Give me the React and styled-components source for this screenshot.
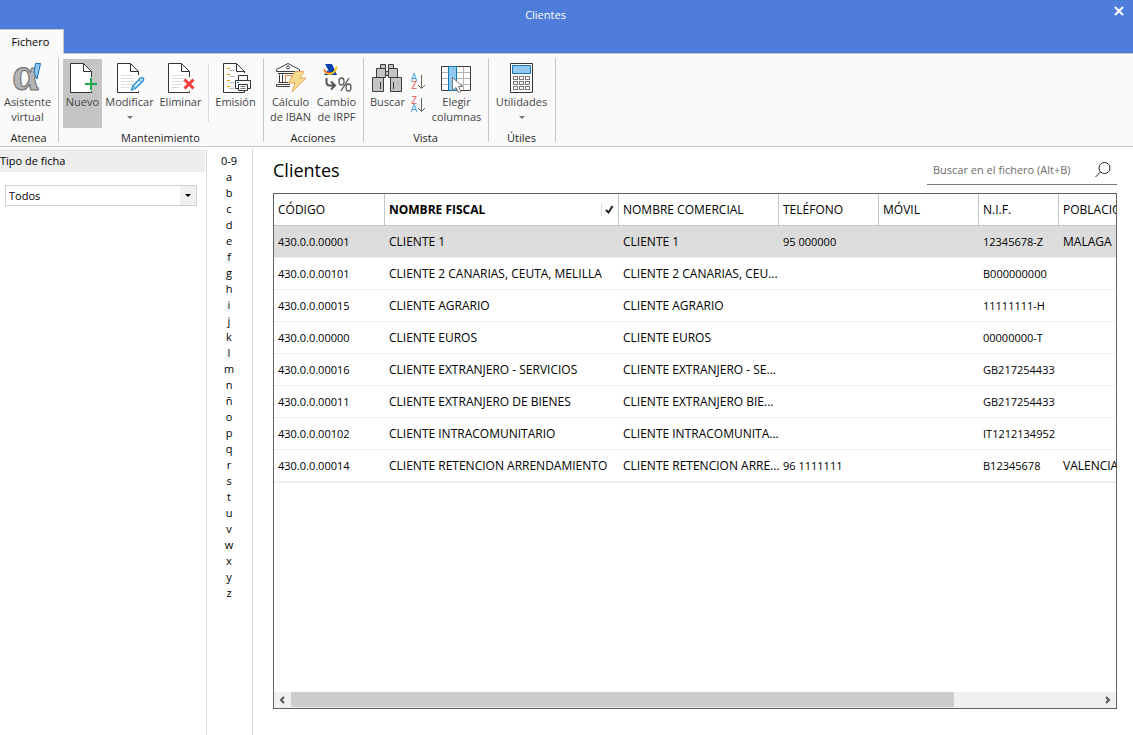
import React, { useRef, useState } from 'react';
import styled, { createGlobalStyle } from 'styled-components';

const GlobalStyle = createGlobalStyle`
  * { box-sizing: border-box; }
  body {
    margin: 0;
    background: #fff;
    color: #000;
    font-family: "Open Sans", "Noto Sans", sans-serif;
    font-size: 11px;
  }
  button, input, select { font: inherit; color: inherit; }
`;

//Window frame
const Window = styled.div`
  display: flex;
  flex-direction: column;
  height: 100vh;
  overflow: hidden;
`;

const TitleBar = styled.header`
  display: flex;
  height: 29px;
  flex: none;
  background: #4d7cdb;
  color: #fff;
`;

const WindowTitle = styled.div`
  flex: 1;
  text-align: center;
  line-height: 30px;
`;

const CloseButton = styled.button`
  display: flex;
  justify-content: flex-end;
  align-items: center;
  width: 42px;
  height: 22px;
  padding: 0 9px 0 0;
  border: 0;
  background: none;
`;

const TabStrip = styled.nav`
  display: flex;
  flex: none;
  height: 24px;
  background: #4d7cdb;
`;

const Tab = styled.button`
  position: relative;
  height: 25px;
  width: 64px;
  padding: 0 2px 2px 0;
  border: solid #c6c6c6;
  border-width: 1px 1px 0 0;
  background: #fafafa;
  color: #000;
`;

//Ribbon
const Ribbon = styled.div`
  display: flex;
  flex: none;
  height: 94px;
  padding-top: 4px;
  background: #fafafa;
  border: solid #c6c6c6;
  border-width: 1px 0;
`;

const Group = styled.section`
  display: flex;
  flex-direction: column;
  width: ${p => p.$width}px;
  padding-top: 1px;
  background: linear-gradient(#c6c6c6, #c6c6c6) right top / 1px 84px no-repeat;
`;

const GroupButtons = styled.div`
  display: flex;
  gap: 2px;
  height: 69px;
  padding: 0 4px;
`;

const GroupCaption = styled.div`
  margin-top: 2px;
  padding-right: 2px;
  line-height: 16px;
  text-align: center;
  color: #222;
`;

const ToolButton = styled.button`
  display: flex;
  flex: none;
  flex-direction: column;
  align-items: center;
  width: ${p => p.$width}px;
  padding: 3px 0 0;
  border: 0;
  background: ${p => (p.$active ? '#c5c5c5' : 'transparent')};
  color: #444;
  line-height: 15px;
  white-space: pre;
`;

const Icon = styled.svg`
  display: block;
  flex: none;
  width: 31px;
  height: 31px;
  margin-bottom: 1px;
  overflow: visible;
`;

const Caret = styled.span`
  margin-top: 7px;
  border: solid transparent;
  border-width: 3px 3px 0;
  border-top-color: #777;
`;

const ToolSeparator = styled.div`
  width: 1px;
  margin: 5px 2px 6px;
  background: #dadada;
`;

const SortButtons = styled.div`
  display: flex;
  flex-direction: column;
  gap: 7px;
  width: 17px;
  padding-top: 15px;
`;

const SortButton = styled.button`
  height: 16px;
  padding: 0;
  border: 0;
  background: none;

  svg { display: block; overflow: visible; }
`;

//Body
const Body = styled.div`
  display: flex;
  flex: 1;
  min-height: 0;
  padding-top: 2px;
`;

const Sidebar = styled.aside`
  flex: none;
  width: 207px;
  border-right: 1px solid #dadada;
`;

const SidebarLabel = styled.label`
  display: block;
  margin-right: 1px;
  background: #eee;
  line-height: 23px;
`;

const SelectBox = styled.div`
  display: flex;
  position: relative;
  margin: 13px 9px 0 5px;
`;

const Select = styled.select`
  flex: 1;
  height: 21px;
  padding: 0 3px;
  border: 1px solid #d0d0d0;
  border-radius: 0;
  appearance: none;
  background: linear-gradient(#f0f0f0, #f0f0f0) right / 16px 100% no-repeat #fff;
`;

const SelectArrow = styled.span`
  position: absolute;
  right: 6px;
  top: 9px;
  border: solid transparent;
  border-width: 3px 3px 0;
  border-top-color: #000;
  pointer-events: none;
`;

const LetterIndex = styled.nav`
  display: flex;
  flex: none;
  flex-direction: column;
  align-items: center;
  width: 46px;
  padding: 4px 1px 0 0;
  border-right: 1px solid #dadada;
`;

const Letter = styled.a`
  line-height: 16px;
  color: #000;
  text-decoration: none;
`;

const Main = styled.main`
  display: flex;
  flex: 1;
  flex-direction: column;
  min-width: 0;
  padding: 6px 16px 26px 20px;
`;

const MainHead = styled.div`
  display: flex;
  justify-content: space-between;
  margin-bottom: 8px;
`;

const Heading = styled.h1`
  margin: 0;
  font-size: 18px;
  font-weight: 400;
  line-height: 30px;
`;

const SearchBox = styled.form`
  display: flex;
  align-items: center;
  width: 190px;
  height: 30px;
  padding: 0 6px;
  border-bottom: 1px solid #777;
`;

const SearchInput = styled.input`
  flex: 1;
  min-width: 0;
  padding: 0;
  border: 0;
  outline: 0;
  background: none;

  &::placeholder { color: #6d6d6d; opacity: 1; }
`;

const SearchButton = styled.button`
  padding: 0;
  border: 0;
  background: none;

  svg { display: block; }
`;

const Grid = styled.div`
  display: flex;
  flex: 1;
  flex-direction: column;
  min-height: 0;
  border: 1px solid #606060;
`;

const GridScroll = styled.div`
  flex: 1;
  overflow: hidden;
`;

const Table = styled.table`
  width: 1027px;
  table-layout: fixed;
  border-collapse: separate;
  border-spacing: 0;
  border-bottom: 1px solid #eee;
  font-size: 12px;
`;

const Th = styled.th`
  height: 32px;
  padding: 0 4px;
  border: solid #c6c6c6;
  border-width: 0 1px 1px 0;
  font-weight: ${p => (p.$sorted ? 700 : 400)};
  text-align: left;
  white-space: nowrap;
`;

const ThContent = styled.div`
  display: flex;
  align-items: center;
  justify-content: space-between;
`;

const SortMark = styled.span`
  padding-left: 3px;
  border-left: 1px solid #dadada;

  svg { display: block; }
`;

const Td = styled.td`
  height: 32px;
  padding: 0 0 0 4px;
  border-bottom: 1px solid #eee;
  font-size: ${p => (p.$numeric ? 11 : 12)}px;
  overflow: hidden;
  white-space: nowrap;
`;

const Tr = styled.tr`
  background: ${p => (p.$selected ? '#dcdcdc' : '#fff')};
`;

const ScrollBar = styled.div`
  display: flex;
  height: 16px;
  background: #f0f0f0;
`;

const ScrollButton = styled.button`
  display: flex;
  align-items: center;
  justify-content: center;
  width: 17px;
  padding: 0;
  border: 0;
  background: none;
`;

const ScrollTrack = styled.div`
  flex: 1;
`;

const ScrollThumb = styled.div`
  width: 82%;
  height: 15px;
  background: #cdcdcd;
`;

//Icons
const Page = ({ open }) => (
  <>
    <path
      d={`M24.5 ${open}V9.5L16.5 1.5H3.5V30.5H24.5V29`}
      fill="#fff"
      stroke="none"
    />
    <path
      d={`M24.5 ${open}V9.5L16.5 1.5H3.5V30.5H24.5V29M16.5 1.5V9.5H24.5`}
      fill="none"
      stroke="#333"
    />
  </>
);

const TextLines = () => (
  <path d="M7 13.5H19M7 16.5H21M7 19.5H20M7 22.5H17M7 25.5H15" stroke="#dedede" />
);

const AlphaIcon = () => (
  <Icon viewBox="0 0 31 31">
    <text
      x="0"
      y="28"
      fontFamily="Liberation Serif, serif"
      fontSize="48"
      fontWeight="700"
      fill="#b4b4b4"
      stroke="#6b6b6b"
    >
      α
    </text>
    <path d="M23.500 1.500H28.500L25 17L22 11z" fill="#8fc6f2" stroke="#1b6fb5" />
  </Icon>
);

const NewIcon = () => (
  <Icon viewBox="0 0 31 31">
    <Page open={15} />
    <path d="M24 16V28M18 22H30" stroke="#1aa74f" strokeWidth="2" />
  </Icon>
);

const EditIcon = () => (
  <Icon viewBox="0 0 31 31">
    <Page open={13} />
    <TextLines />
    <path
      d="M17.500 28L19 23.500L26.500 16Q28.500 15 29.500 16.500Q30 18 29 19L21.500 26.500z"
      fill="#d3eaf9"
      stroke="#1d86c8"
      strokeWidth="1.300"
    />
    <path d="M19 23.500L21.500 26.500M25 17.500L27.500 20" stroke="#1d86c8" />
  </Icon>
);

const DeleteIcon = () => (
  <Icon viewBox="0 0 31 31">
    <Page open={15} />
    <TextLines />
    <path d="M19.500 17.500L28.500 26.500M28.500 17.500L19.500 26.500" stroke="#ee3d3a" strokeWidth="3" />
  </Icon>
);

const PrintIcon = () => (
  <Icon viewBox="0 0 31 31">
    <path d="M24.500 11V9.500L16.500 1.500H3.500V30.500H24.500V29M16.500 1.500V9.500H24.500" fill="#fff" stroke="#333" />
    <path d="M7 6.500H10M7 12.500H10M7 18.500H10M7 24.500H10" stroke="#e8940f" />
    <path d="M9 8.500H14M9 14.500H15M9 20.500H14M9 26.500H14" stroke="#bdbdbd" />
    <path d="M18.500 18.500V13.500H27.500V18.500" fill="#fff" stroke="#333" />
    <path d="M15.500 18.500H30.500V26.500H15.500z" fill="#fff" stroke="#333" />
    <path d="M18.500 22.500H27.500V28.500H18.500z" fill="#fff" stroke="#333" />
    <path d="M20.500 24.500H25.500M20.500 26.500H25.500" stroke="#777" />
    <path d="M17 20.500H19" stroke="#1d86c8" />
  </Icon>
);

const BankIcon = () => (
  <Icon viewBox="0 0 31 31" fill="none" stroke="#3c3c3c">
    <path d="M1.500 9.500V7.500L13 1.500L24.500 7.500V9.500z" fill="#fff" />
    <circle cx="13" cy="5.500" r="1.500" />
    <path d="M4.500 12.500V20M7.500 12.500V20M19.500 12.500V14M22.500 12.500V13M3 11.500H23" />
    <path d="M3.500 20.500H15M1.500 24.500H15M1.500 22.500H15M1.500 22.500V24.500" />
    <path d="M10.500 20V13.500H16.500V20" stroke="#e08d45" />
    <path
      d="M20 9.500H29L25 16H31L17 30L20 21H13.500z"
      fill="#f7da8c"
      stroke="#e9a55c"
    />
  </Icon>
);

const IrpfIcon = () => (
  <Icon viewBox="0 0 31 31" fill="none">
    <path d="M4 2H11L16 13H10z" fill="#0b3fa8" />
    <path d="M3 13L7 8L10 13z" fill="#0b3fa8" />
    <path d="M3 8.500Q6 13 10.500 11.500T15.500 4.500" stroke="#f5c518" strokeWidth="2" />
    <path d="M3 7Q4.500 11.500 9.500 10.500" stroke="#e2352c" />
    <path d="M5.500 16V20Q5.500 23.500 9 23.500H13M10 19.500L14 23.500L10 27.500" stroke="#555" strokeWidth="2" />
    <ellipse cx="20.500" cy="19.500" rx="2.500" ry="3.500" stroke="#555" strokeWidth="1.300" />
    <ellipse cx="27.500" cy="25.500" rx="2.500" ry="3.500" stroke="#555" strokeWidth="1.300" />
    <path d="M28 16L20 29" stroke="#555" strokeWidth="1.300" />
  </Icon>
);

const BinocularsIcon = () => (
  <Icon viewBox="0 0 31 31" fill="#c6c4c3" stroke="#3c3c3c">
    <path d="M8.500 6.500V2.500H13.500V6.500M16.500 6.500V2.500H21.500V6.500" />
    <path d="M4.500 15.500V6.500H13.500V15.500zM16.500 15.500V6.500H25.500V15.500z" />
    <path d="M13.500 9.500H16.500V13.500H13.500z" />
    <path d="M.500 29.500V15.500H11.500V29.500zM18.500 29.500V15.500H29.500V29.500z" />
    <path d="M8.500 20V27M21.500 20V27" />
  </Icon>
);

const ColumnsIcon = () => (
  <Icon viewBox="0 0 31 31" fill="none">
    <path d="M.500 4.500H29.500V28.500H.500z" fill="#fff" stroke="#3c3c3c" />
    <path d="M1 10.500H29M1 16.500H29M1 22.500H29M15.500 5V28M22.500 5V28" stroke="#b5b5b5" />
    <path d="M7.500 4.500H15.500V28.500H7.500z" fill="#8fc8f0" stroke="#1576b8" />
    <path
      d="M11.500 15.500V28.500L15 25.500L17.500 30.500L20 29.500L17.500 24.500H21.500z"
      fill="#fff"
      stroke="#777"
    />
  </Icon>
);

const CalculatorIcon = () => (
  <Icon viewBox="0 0 31 31" fill="none">
    <path d="M4.500 1.500H26.500V30.500H4.500z" fill="#fff" stroke="#333" />
    <path d="M6.500 3.500H24.500V11.500H6.500z" fill="#8fc8f0" stroke="#1576b8" />
    {[14.5, 19.5, 24.5].map(y =>
      [7.5, 13.5, 19.5].map(x => (
        <rect key={`${x}-${y}`} x={x} y={y} width="4" height="3" stroke="#777" />
      ))
    )}
  </Icon>
);

const SortIcon = ({ first, second, firstColor, secondColor }) => (
  <svg width="17" height="16" viewBox="0 0 17 16">
    <g fontFamily="Open Sans, sans-serif" fontSize="10" textAnchor="middle">
      <text x="5" y="7" fill={firstColor}>{first}</text>
      <text x="5" y="15" fill={secondColor}>{second}</text>
    </g>
    <path d="M12.500 1V14M9 11L12.500 14.500L16 11" fill="none" stroke="#666" />
  </svg>
);

const Chevron = ({ d }) => (
  <svg width="7" height="8" viewBox="0 0 7 8">
    <path d={d} fill="none" stroke="#555" strokeWidth="2" />
  </svg>
);

const LETTERS = ['0-9', ...'abcdefghijklmnñopqrstuvwxyz'];

const COLUMNS = [
  { title: 'CÓDIGO', width: 111, numeric: true },
  { title: 'NOMBRE FISCAL', width: 234, sorted: true },
  { title: 'NOMBRE COMERCIAL', width: 160 },
  { title: 'TELÉFONO', width: 100, numeric: true },
  { title: 'MÓVIL', width: 100, numeric: true },
  { title: 'N.I.F.', width: 80, numeric: true },
  { title: 'POBLACIÓN', width: 242 },
];

const CLIENTS = [
  ['430.0.0.00001', 'CLIENTE 1', 'CLIENTE 1', '95 000000', '', '12345678-Z', 'MALAGA'],
  ['430.0.0.00101', 'CLIENTE 2 CANARIAS, CEUTA, MELILLA', 'CLIENTE 2 CANARIAS, CEU...', '', '', 'B000000000', ''],
  ['430.0.0.00015', 'CLIENTE AGRARIO', 'CLIENTE AGRARIO', '', '', '11111111-H', ''],
  ['430.0.0.00000', 'CLIENTE EUROS', 'CLIENTE EUROS', '', '', '00000000-T', ''],
  ['430.0.0.00016', 'CLIENTE EXTRANJERO - SERVICIOS', 'CLIENTE EXTRANJERO - SE...', '', '', 'GB217254433', ''],
  ['430.0.0.00011', 'CLIENTE EXTRANJERO DE BIENES', 'CLIENTE EXTRANJERO BIE...', '', '', 'GB217254433', ''],
  ['430.0.0.00102', 'CLIENTE INTRACOMUNITARIO', 'CLIENTE INTRACOMUNITA...', '', '', 'IT1212134952', ''],
  ['430.0.0.00014', 'CLIENTE RETENCION ARRENDAMIENTO', 'CLIENTE RETENCION ARRE...', '96 1111111', '', 'B12345678', 'VALENCIA'],
];

const RibbonBar = () => (
  <Ribbon>
    <Group $width={59}>
      <GroupButtons>
        <ToolButton $width={47}><AlphaIcon />{'Asistente\nvirtual'}</ToolButton>
      </GroupButtons>
      <GroupCaption>Atenea</GroupCaption>
    </Group>
    <Group $width={205}>
      <GroupButtons>
        <ToolButton $width={39} $active><NewIcon />Nuevo</ToolButton>
        <ToolButton $width={51}><EditIcon />Modificar<Caret /></ToolButton>
        <ToolButton $width={47}><DeleteIcon />Eliminar</ToolButton>
        <ToolSeparator />
        <ToolButton $width={45}><PrintIcon />Emisión</ToolButton>
      </GroupButtons>
      <GroupCaption>Mantenimiento</GroupCaption>
    </Group>
    <Group $width={100}>
      <GroupButtons>
        <ToolButton $width={45}><BankIcon />{'Cálculo\nde IBAN'}</ToolButton>
        <ToolButton $width={43}><IrpfIcon />{'Cambio\nde IRPF'}</ToolButton>
      </GroupButtons>
      <GroupCaption>Acciones</GroupCaption>
    </Group>
    <Group $width={125}>
      <GroupButtons>
        <ToolButton $width={39}><BinocularsIcon />Buscar</ToolButton>
        <SortButtons>
          <SortButton aria-label="Orden ascendente">
            <SortIcon first="A" second="Z" firstColor="#3d9bd8" secondColor="#ee5a5a" />
          </SortButton>
          <SortButton aria-label="Orden descendente">
            <SortIcon first="Z" second="A" firstColor="#ee5a5a" secondColor="#3d9bd8" />
          </SortButton>
        </SortButtons>
        <ToolButton $width={57}><ColumnsIcon />{'Elegir\ncolumnas'}</ToolButton>
      </GroupButtons>
      <GroupCaption>Vista</GroupCaption>
    </Group>
    <Group $width={67}>
      <GroupButtons>
        <ToolButton $width={57}><CalculatorIcon />Utilidades<Caret /></ToolButton>
      </GroupButtons>
      <GroupCaption>Útiles</GroupCaption>
    </Group>
  </Ribbon>
);

const ClientTable = ({ selected, onSelect }) => (
  <Table>
    <colgroup>
      {COLUMNS.map(col => <col key={col.title} width={col.width} />)}
    </colgroup>
    <thead>
      <tr>
        {COLUMNS.map(col => (
          <Th key={col.title} $sorted={col.sorted}>
            <ThContent>
              {col.title}
              {col.sorted && (
                <SortMark>
                  <svg width="9" height="13" viewBox="0 0 9 13">
                    <path d="M1 7L3.500 9.500L7.500 3" fill="none" stroke="#222" strokeWidth="2" />
                  </svg>
                </SortMark>
              )}
            </ThContent>
          </Th>
        ))}
      </tr>
    </thead>
    <tbody>
      {CLIENTS.map((client, i) => (
        <Tr key={client[0]} $selected={i === selected} onClick={() => onSelect(i)}>
          {client.map((value, j) => (
            <Td key={j} $numeric={COLUMNS[j].numeric}>{value}</Td>
          ))}
        </Tr>
      ))}
    </tbody>
  </Table>
);

const App = () => {
  const [selected, setSelected] = useState(0);
  const scroller = useRef(null);

  const scroll = amount => scroller.current.scrollBy({ left: amount });

  return (
    <Window>
      <GlobalStyle />
      <TitleBar>
        <WindowTitle>Clientes</WindowTitle>
        <CloseButton aria-label="Cerrar">
          <svg width="10" height="10" viewBox="0 0 10 10">
            <path d="M1 1L9 9M9 1L1 9" stroke="#fff" strokeWidth="2" />
          </svg>
        </CloseButton>
      </TitleBar>
      <TabStrip>
        <Tab>Fichero</Tab>
      </TabStrip>
      <RibbonBar />
      <Body>
        <Sidebar>
          <SidebarLabel htmlFor="tipo">Tipo de ficha</SidebarLabel>
          <SelectBox>
            <Select id="tipo">
              <option>Todos</option>
            </Select>
            <SelectArrow />
          </SelectBox>
        </Sidebar>
        <LetterIndex>
          {LETTERS.map(letter => (
            <Letter key={letter} href={`#${letter}`}>{letter}</Letter>
          ))}
        </LetterIndex>
        <Main>
          <MainHead>
            <Heading>Clientes</Heading>
            <SearchBox onSubmit={e => e.preventDefault()}>
              <SearchInput
                aria-label="Buscar en el fichero"
                placeholder="Buscar en el fichero (Alt+B)"
              />
              <SearchButton aria-label="Buscar">
                <svg width="16" height="16" viewBox="0 0 16 16" fill="none" stroke="#222">
                  <circle cx="9.500" cy="6" r="5.500" />
                  <path d="M5.500 10L.500 15" />
                </svg>
              </SearchButton>
            </SearchBox>
          </MainHead>
          <Grid>
            <GridScroll ref={scroller}>
              <ClientTable selected={selected} onSelect={setSelected} />
            </GridScroll>
            <ScrollBar>
              <ScrollButton aria-label="Izquierda" onClick={() => scroll(-60)}>
                <Chevron d="M5 1L2 4L5 7" />
              </ScrollButton>
              <ScrollTrack><ScrollThumb /></ScrollTrack>
              <ScrollButton aria-label="Derecha" onClick={() => scroll(60)}>
                <Chevron d="M2 1L5 4L2 7" />
              </ScrollButton>
            </ScrollBar>
          </Grid>
        </Main>
      </Body>
    </Window>
  );
};

export default App;
